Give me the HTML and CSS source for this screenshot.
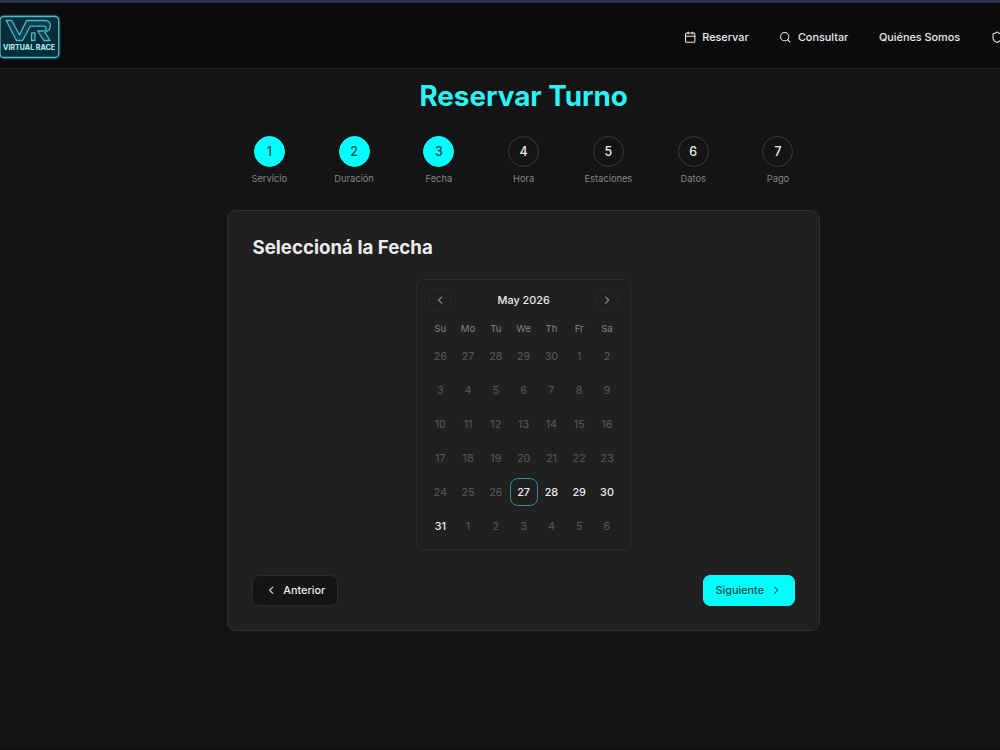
FILE: index.html
```html
<!DOCTYPE html>
<html lang="es">
<head>
    <meta charset="UTF-8">
    <meta name="viewport" content="width=device-width, initial-scale=1.0">
    <title>Virtual Race - Reservar Turno</title>
    <link rel="stylesheet" href="styles.css">
</head>
<body>
    <div class="top-strip"></div>
    <header class="header">
        <svg class="logo" viewBox="0 0 62 46" role="img" aria-label="Virtual Race">
            <rect class="logo-glow" x="0" y="2.500" width="58.700" height="41" rx="4"/>
            <rect class="logo-box" x="0" y="2.500" width="58.700" height="41" rx="4"/>
            <path class="logo-line" d="M6.200 6.500h5.600l7.700 14.500 7-14.500H45c7.500 0 7 9.500 0 12l5 8h-6l-6.400-9.500h5.800c3.800 0 3.800-4.800 0-4.800H30.300L22.500 26.500h-6z"/>
            <path class="logo-line" d="M31.500 26.500V19h3.500v7.500z"/>
            <text class="logo-text" x="3" y="35.800" textLength="52" lengthAdjust="spacingAndGlyphs">VIRTUAL RACE</text>
        </svg>
        <nav class="nav">
            <a class="nav-link">
                <svg class="icon" viewBox="0 0 24 24"><path d="M8 2v4M16 2v4M3 10h18"/><rect x="3" y="4" width="18" height="18" rx="2"/></svg>
                Reservar
            </a>
            <a class="nav-link">
                <svg class="icon" viewBox="0 0 24 24"><circle cx="11" cy="11" r="8"/><path d="m21 21-4.300-4.300"/></svg>
                Consultar
            </a>
            <a class="nav-link">Quiénes Somos</a>
            <a class="nav-link">
                <svg class="icon" viewBox="0 0 24 24"><path d="M20 13c0 5-3.500 7.500-7.660 8.950a1 1 0 0 1-.67-.01C7.500 20.500 4 18 4 13V6a1 1 0 0 1 1-1c2 0 4.500-1.200 6.240-2.720a1.170 1.170 0 0 1 1.520 0C14.510 3.810 17 5 19 5a1 1 0 0 1 1 1z"/></svg>
            </a>
        </nav>
    </header>

    <main class="container">
        <h1>Reservar Turno</h1>

        <div class="steps">
            <div class="step done"><span class="circle">1</span><span class="step-label">Servicio</span></div>
            <div class="step done"><span class="circle">2</span><span class="step-label">Duración</span></div>
            <div class="step done"><span class="circle">3</span><span class="step-label">Fecha</span></div>
            <div class="step"><span class="circle">4</span><span class="step-label">Hora</span></div>
            <div class="step"><span class="circle">5</span><span class="step-label">Estaciones</span></div>
            <div class="step"><span class="circle">6</span><span class="step-label">Datos</span></div>
            <div class="step"><span class="circle">7</span><span class="step-label">Pago</span></div>
        </div>

        <section class="card">
            <h2>Seleccioná la Fecha</h2>

            <div class="calendar">
                <div class="cal-header">
                    <button class="cal-nav" aria-label="Previous month"><svg class="icon" viewBox="0 0 24 24"><path d="m15 18-6-6 6-6"/></svg></button>
                    <span class="cal-title">May 2026</span>
                    <button class="cal-nav" aria-label="Next month"><svg class="icon" viewBox="0 0 24 24"><path d="m9 18 6-6-6-6"/></svg></button>
                </div>
                <div class="week weekdays"><span>Su</span><span>Mo</span><span>Tu</span><span>We</span><span>Th</span><span>Fr</span><span>Sa</span></div>
                <div class="week"><span>26</span><span>27</span><span>28</span><span>29</span><span>30</span><span>1</span><span>2</span></div>
                <div class="week"><span>3</span><span>4</span><span>5</span><span>6</span><span>7</span><span>8</span><span>9</span></div>
                <div class="week"><span>10</span><span>11</span><span>12</span><span>13</span><span>14</span><span>15</span><span>16</span></div>
                <div class="week"><span>17</span><span>18</span><span>19</span><span>20</span><span>21</span><span>22</span><span>23</span></div>
                <div class="week"><span>24</span><span>25</span><span>26</span><span class="open today">27</span><span class="open">28</span><span class="open">29</span><span class="open">30</span></div>
                <div class="week"><span class="open">31</span><span>1</span><span>2</span><span>3</span><span>4</span><span>5</span><span>6</span></div>
            </div>

            <div class="actions">
                <button class="btn btn-outline"><svg class="icon" viewBox="0 0 24 24"><path d="m15 18-6-6 6-6"/></svg>Anterior</button>
                <button class="btn btn-primary">Siguiente<svg class="icon" viewBox="0 0 24 24"><path d="m9 18 6-6-6-6"/></svg></button>
            </div>
        </section>
    </main>
</body>
</html>
```
FILE: styles.css
```css
* {
    box-sizing: border-box;
}
body {
    margin: 0;
    height: 750px;
    overflow: hidden;
    background: #141414;
    color: #ececec;
    font-family: Inter, "Liberation Sans", sans-serif;
    font-size: 10.8px;
    border-bottom: 2px solid #100c10;
}
.top-strip {
    height: 4px;
    background: #2b304b;
    border-bottom: 1px solid #05051a;
}
.header {
    display: flex;
    align-items: center;
    height: 65px;
    padding-top: 2px;
    background: #0b0b0b;
    border-bottom: 1px solid #202020;
    overflow: hidden;
}
.logo {
    flex: none;
    width: 62px;
    height: 46px;
    margin-right: 621.7px;
    overflow: visible;
}
.logo-box {
    fill: #062d3a;
    stroke: #56b9c7;
    stroke-width: 1.3;
}
.logo-glow {
    fill: none;
    stroke: #0d6473;
    stroke-width: 4;
    opacity: 0.5;
}
.logo-line {
    fill: #0a4250;
    stroke: #4bb6c8;
    stroke-width: 1.3;
    stroke-linejoin: round;
}
.logo-text {
    fill: #a4e6ee;
    font-size: 7px;
    font-weight: 800;
}
.nav {
    display: flex;
    align-items: center;
    gap: 30.7px;
    flex: none;
}
.nav-link {
    display: flex;
    align-items: center;
    gap: 6.2px;
    font-weight: 500;
    font-size: 10.85px;
    white-space: nowrap;
}
.icon {
    flex: none;
    width: 12.4px;
    height: 12.4px;
    fill: none;
    stroke: currentColor;
    stroke-width: 2;
    stroke-linecap: round;
    stroke-linejoin: round;
}
.container {
    width: 593.500px;
    margin-left: 226.9px;
}
h1 {
    margin: 0;
    padding-top: 9px;
    text-align: center;
    color: #2cf4f6;
    font-size: 27.8px;
    line-height: 36px;
    font-weight: 700;
}
.steps {
    display: flex;
    margin-top: 22px;
}
.step {
    flex: 1;
    display: flex;
    flex-direction: column;
    align-items: center;
}
.circle {
    display: flex;
    align-items: center;
    justify-content: center;
    width: 31px;
    height: 31px;
    border: 1.500px solid #3a3a3a;
    border-radius: 50%;
    font-size: 12.4px;
    font-weight: 500;
}
.done .circle {
    background: #00ffff;
    border-color: #00ffff;
    color: #0d4a4a;
}
.step-label {
    margin-top: 6px;
    font-size: 9.3px;
    line-height: 12.500px;
    color: #858585;
}
.card {
    height: 421px;
    margin-top: 24.500px;
    padding: 24px 24.500px;
    background: #202020;
    border: 1px solid #303030;
    border-radius: 9px;
}
h2 {
    margin: 0;
    font-size: 18.7px;
    line-height: 25px;
    font-weight: 700;
}
.calendar {
    width: 214.500px;
    height: 271px;
    margin: 19px auto 0;
    padding: 9px;
    border: 1px solid #2d2d2d;
    border-radius: 7px;
}
.cal-header {
    display: flex;
    align-items: center;
    justify-content: space-between;
    height: 22px;
    padding: 0 2.500px;
}
.cal-nav {
    display: flex;
    align-items: center;
    justify-content: center;
    width: 22px;
    height: 22px;
    padding: 0;
    color: #999;
    background: transparent;
    border: 1px solid #272727;
    border-radius: 6px;
}
.cal-title {
    font-size: 10.85px;
    font-weight: 500;
}
.week {
    display: flex;
    height: 27.8px;
    margin-top: 6.2px;
}
.week span {
    flex: 1;
    display: flex;
    align-items: center;
    justify-content: center;
    font-size: 10.8px;
    color: #585858;
}
.weekdays {
    height: 15px;
    margin-top: 9.6px;
    margin-bottom: 6.6px;
}
.weekdays span {
    font-size: 9.6px;
    color: #858585;
}
.week .open {
    color: #ececec;
    font-weight: 500;
}
.week .today {
    flex: none;
    width: 27.8px;
    border: 1.500px solid #2b8f94;
    border-radius: 8px;
}
.actions {
    display: flex;
    justify-content: space-between;
    margin-top: 25px;
}
.btn {
    display: flex;
    align-items: center;
    gap: 6.2px;
    height: 31px;
    padding: 0 11.3px 1px;
    border: 1px solid #2b2b2b;
    border-radius: 7px;
    font-family: inherit;
    font-size: 10.85px;
    font-weight: 500;
}
.btn-outline {
    background: #141414;
    color: #ececec;
}
.btn-primary {
    background: #00ffff;
    border-color: #00ffff;
    color: #0d4a4a;
}
```
